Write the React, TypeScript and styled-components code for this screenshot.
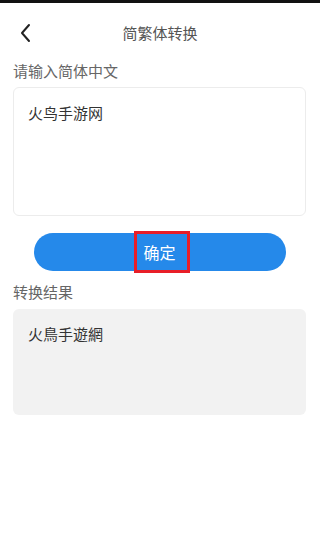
import React from "react";
import styled, { createGlobalStyle } from "styled-components";

const Global = createGlobalStyle`
  html, body { margin: 0; padding: 0; background: #fff; }
  body { font-family: "Noto Sans CJK SC", "Noto Sans", sans-serif; }
  * { box-sizing: border-box; }
`;

const Page = styled.div`
  width: 320px;
  height: 550px;
  background: #fff;
  display: flex;
  flex-direction: column;
  border-top: 3px solid #111;
`;

const Header = styled.div`
  height: 58px;
  display: flex;
  align-items: center;
  justify-content: center;
  position: relative;
`;

const Back = styled.div`
  position: absolute;
  left: 18px;
  top: 20px;
  width: 16px;
  height: 20px;
`;

const Title = styled.div`
  font-size: 15px;
  color: #555;
  margin-top: 1px;
`;

const Body = styled.div`
  padding: 0 14px 0 13px;
  display: flex;
  flex-direction: column;
`;

const Label = styled.div`
  font-size: 15px;
  color: #666;
  line-height: 20px;
`;

const Spacer = styled.div<{ $h: number }>`
  height: ${(p) => p.$h}px;
`;

const Box = styled.div<{ $filled?: boolean }>`
  height: ${(p) => (p.$filled ? 106 : 129)}px;
  border-radius: 6px;
  background: ${(p) => (p.$filled ? "#f2f2f2" : "#fff")};
  border: ${(p) => (p.$filled ? "none" : "1px solid #ececec")};
  padding: ${(p) => (p.$filled ? "15px 15px" : "15px 14px")};
  font-size: 15px;
  color: #333;
  line-height: 20px;
`;

const ButtonRow = styled.div`
  display: flex;
  justify-content: center;
  padding: 17px 0 0;
`;

const Button = styled.div`
  width: 252px;
  height: 38px;
  border-radius: 19px;
  background: #2589ea;
  display: flex;
  align-items: center;
  justify-content: center;
  position: relative;
`;

const ButtonText = styled.span`
  color: #fff;
  font-size: 16px;
  line-height: 20px;
`;

const Highlight = styled.div`
  position: absolute;
  left: 100px;
  top: -2px;
  width: 56px;
  height: 42px;
  border: 3px solid #e81e28;
`;

export default function App() {
  return (
    <>
      <Global />
      <Page>
        <Header>
          <Back>
            <svg width="16" height="20" viewBox="0 0 16 20">
              <path d="M11 2 L4 10 L11 18" stroke="#222" strokeWidth="2" fill="none" strokeLinecap="round" strokeLinejoin="round" />
            </svg>
          </Back>
          <Title>简繁体转换</Title>
        </Header>
        <Body>
          <Label>请输入简体中文</Label>
          <Spacer $h={6} />
          <Box>火鸟手游网</Box>
          <ButtonRow>
            <Button>
              <Highlight />
              <ButtonText>确定</ButtonText>
            </Button>
          </ButtonRow>
          <Spacer $h={11} />
          <Label>转换结果</Label>
          <Spacer $h={7} />
          <Box $filled>火鳥手遊網</Box>
        </Body>
      </Page>
    </>
  );
}
